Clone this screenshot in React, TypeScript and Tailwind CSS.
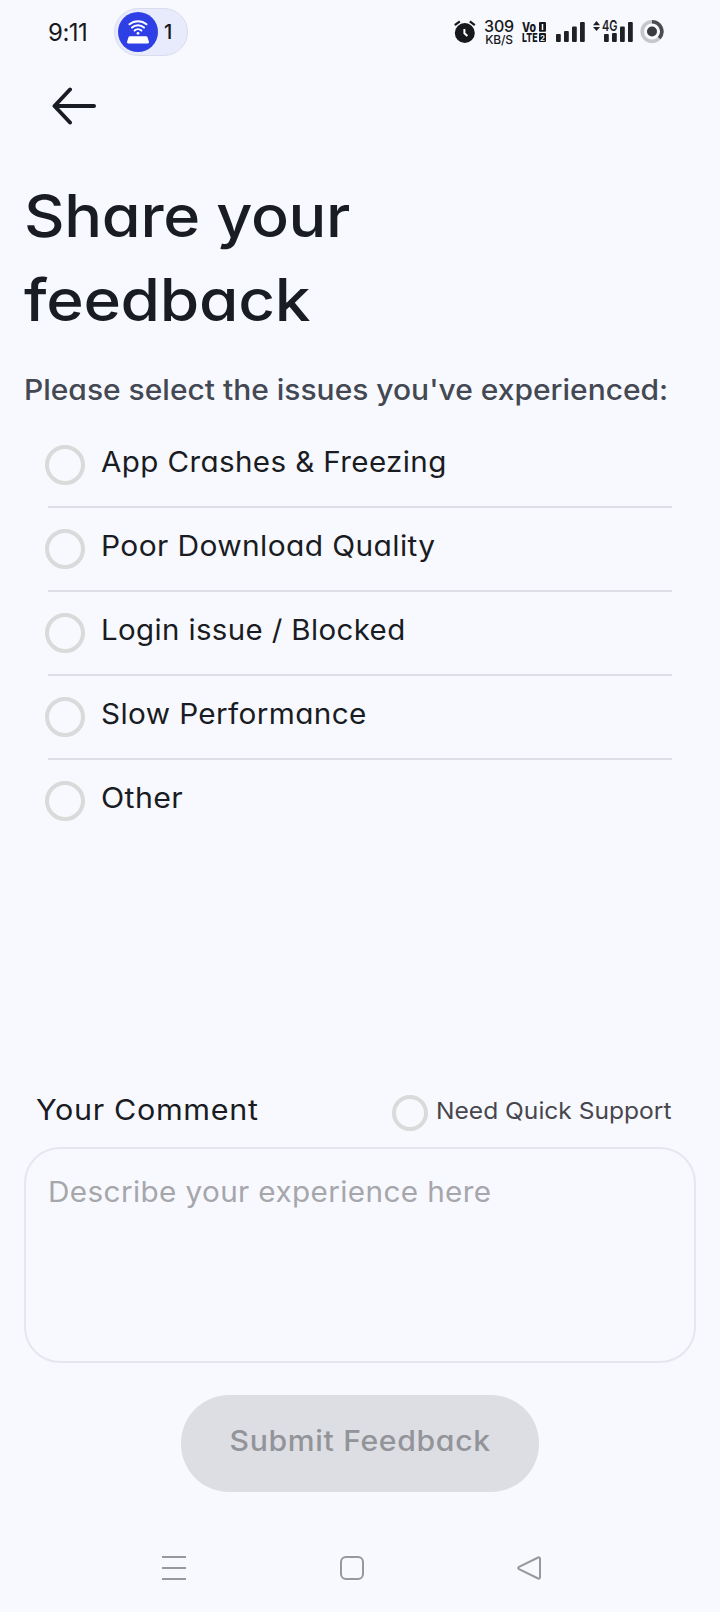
import React from "react";

const options = [
  { label: "App Crashes & Freezing", stretch: "scale-x-[1.057]" },
  { label: "Poor Download Quality", stretch: "scale-x-[1.069]" },
  { label: "Login issue / Blocked", stretch: "scale-x-[1.052]" },
  { label: "Slow Performance", stretch: "scale-x-[1.062]" },
  { label: "Other", stretch: "scale-x-[1.085]" },
];

function StatusBar() {
  return (
    <div className="flex h-16 items-start pl-[48px] text-[#17181c]">
      <span className="mt-[19px] w-[66px] whitespace-nowrap text-[24px] leading-[28px] tracking-[-0.5px]">9:11</span>
      <div className="mt-2 flex h-12 w-[74px] items-center rounded-full border border-[#d9dcee] bg-[#e8ebfb] pl-[3px]">
        <svg width="40" height="40" viewBox="0 0 40 40" className="shrink-0">
          <circle cx="20" cy="20" r="20" fill="#2e3fe6" />
          <g fill="none" stroke="#fff" strokeWidth="2" strokeLinecap="round">
            <path d="M11.500 12.300a13 13 0 0 1 17 0" />
            <path d="M14 15.600a9 9 0 0 1 12 0" />
            <path d="M16.600 18.600a5 5 0 0 1 6.800 0" />
          </g>
          <circle cx="20" cy="21.300" r="1.400" fill="#fff" />
          <path d="M12.200 24.300h15.600c1 0 1.500.4 1.800 1.300l1.300 4.200c.3 1-.2 1.600-1.200 1.600H10.300c-1 0-1.500-.6-1.200-1.600l1.300-4.200c.3-.9.8-1.300 1.800-1.300z" fill="#fff" />
        </svg>
        <span className="ml-[6px] text-[20px] font-medium leading-none">1</span>
      </div>
      <div className="ml-[266px] mt-[18px] flex h-7 items-start">
        <svg width="22" height="28" viewBox="0 0 22 28">
          <circle cx="10.800" cy="15" r="10" fill="#17181c" />
          <path d="M.8 7.200 5.800 3.400M20.800 7.200 15.800 3.400" stroke="#17181c" strokeWidth="2.200" fill="none" />
          <path d="M10.400 11v4.200l3 2.700" stroke="#fff" strokeWidth="2" fill="none" />
        </svg>
        <div className="ml-[8px] mt-[2px] flex w-[30px] flex-col items-center">
          <span className="text-[16px] font-medium leading-[13px] tracking-[-0.2px]">309</span>
          <span className="whitespace-nowrap text-[12px] font-medium leading-[13px] tracking-[-0.2px]">KB/S</span>
        </div>
        <svg width="26" height="28" viewBox="0 0 26 28" className="ml-[8px]" fill="#17181c">
          <text x="0" y="13.600" fontSize="13" fontWeight="800" textLength="14" lengthAdjust="spacingAndGlyphs">Vo</text>
          <text x="0" y="24" fontSize="12" fontWeight="800" textLength="15.500" lengthAdjust="spacingAndGlyphs">LTE</text>
          <rect x="17" y="4" width="7" height="9.800" rx="1" />
          <rect x="17" y="15" width="7" height="9" rx="1" />
          <path d="M20.500 6v6" stroke="#fff" strokeWidth="1.500" />
          <text x="18" y="22.500" fontSize="8" fontWeight="600" fill="#fff">2</text>
        </svg>
        <svg width="30" height="28" viewBox="0 0 30 28" className="ml-[8px]" fill="#202125">
          <rect x="0" y="16" width="4.800" height="8" rx="1" />
          <rect x="8" y="13" width="4.800" height="11" rx="1" />
          <rect x="16" y="8.500" width="4.800" height="15.500" rx="1" />
          <rect x="24" y="4" width="4.800" height="20" rx="1" />
        </svg>
        <svg width="42" height="28" viewBox="0 0 42 28" className="ml-[6px]" fill="#202125">
          <path d="M4.500 3 8 7.200H1zM4.500 13 8 8.900H1z" />
          <text x="10" y="13.400" fontSize="14" fontWeight="600" textLength="15.500" lengthAdjust="spacingAndGlyphs">4G</text>
          <rect x="12" y="16" width="4.800" height="8" rx="1" />
          <rect x="20" y="15" width="4.800" height="9" rx="1" />
          <rect x="28" y="8.500" width="4.800" height="15.500" rx="1" />
          <rect x="36" y="4" width="4.800" height="20" rx="1" />
        </svg>
        <svg width="24" height="28" viewBox="0 0 24 28" className="ml-[5.5px]">
          <circle cx="12" cy="13.500" r="9.800" fill="none" stroke="#c6c7cb" strokeWidth="3.600" />
          <path d="M12 3.700a9.800 9.800 0 0 1 7.200 16.400" fill="none" stroke="#4b4c50" strokeWidth="3.600" />
          <circle cx="12" cy="13.500" r="5" fill="#3a3b3f" />
        </svg>
      </div>
    </div>
  );
}

export default function App() {
  return (
    <div className="flex h-[1612px] w-[720px] flex-col overflow-hidden bg-[#f8f9ff] font-['Inter',sans-serif] text-[#191c22] [font-feature-settings:'cv11']">
      <StatusBar />
      <header className="h-[110px] pl-[52px] pt-[23px]">
        <svg width="44" height="38" viewBox="0 0 44 38" fill="none" stroke="#191c22" strokeWidth="4" strokeLinecap="round" strokeLinejoin="round">
          <path d="M42 19H2.500M18 2.500 2.500 19 18 35.500" />
        </svg>
      </header>
      <h1 className="flex flex-col items-start pl-6 text-[59px] font-medium leading-[84px] tracking-[-0.3px]">
        <span className="origin-left scale-x-[1.066]">Share your</span>
        <span className="origin-left scale-x-[1.083]">feedback</span>
      </h1>
      <p className="mt-[27px] flex pl-6 text-[28px] font-medium leading-[42px] text-[#434852]">
        <span className="origin-left scale-x-[1.07] whitespace-nowrap">Please select the issues you've experienced:</span>
      </p>
      <ul className="ml-12 mr-12 mt-[13px]">
        {options.map((o) => (
          <li key={o.label} className="flex h-[84px] items-start border-b-2 border-[#dddfe6] last:border-transparent">
            <span className="-ml-[3px] mt-[21px] size-10 shrink-0 rounded-full border-4 border-[#dadada]" />
            <span className={"ml-4 mt-[17px] origin-left whitespace-nowrap text-[28px] leading-[42px] tracking-[0.35px] " + o.stretch}>{o.label}</span>
          </li>
        ))}
      </ul>
      <div className="mt-[245px] flex h-[42px] items-start pl-9">
        <div className="flex w-[355.5px] text-[28px] leading-[42px]">
          <span className="origin-left scale-x-[1.09] whitespace-nowrap tracking-[0.6px]">Your Comment</span>
        </div>
        <span className="mt-[5.5px] size-9 shrink-0 rounded-full border-4 border-[#dadada]" />
        <span className="ml-2 mt-px origin-left scale-x-[1.045] whitespace-nowrap text-[23.5px] leading-[42px] text-[#47464c]">Need Quick Support</span>
      </div>
      <div className="mx-6 mt-4 flex h-[216px] items-start rounded-[36px] border-2 border-[#e6e7ee] pl-[22px] pt-[22px] text-[28px] leading-[42px] text-[#a6a6ab]">
        <span className="origin-left scale-x-[1.061] tracking-[0.35px]">Describe your experience here</span>
      </div>
      <button className="ml-[181px] mt-8 flex h-[97px] w-[358px] items-start justify-center rounded-[48px] bg-[#dddee3] pt-[25px] text-[28px] font-medium leading-[42px] text-[#929499]">
        <span className="scale-x-[1.078] tracking-[0.6px]">Submit Feedback</span>
      </button>
      <nav className="mt-[62px] flex pl-[161px]">
        <svg width="26" height="28" viewBox="0 0 26 28" stroke="#97989d" strokeWidth="2" fill="none">
          <path d="M1 3h24M1 14h24M1 25h24" />
        </svg>
        <svg width="26" height="28" viewBox="0 0 26 28" stroke="#97989d" strokeWidth="2" fill="none" className="ml-[152px]">
          <rect x="2" y="3" width="22" height="22" rx="5" />
        </svg>
        <svg width="26" height="28" viewBox="0 0 26 28" stroke="#97989d" strokeWidth="2" fill="none" strokeLinejoin="round" className="ml-[151px]">
          <path d="M22.200 3.500 3 12.800c-1 .5-1 1.900 0 2.400l19.200 9.300c.9.400 1.800-.2 1.800-1.200V4.700c0-1-.9-1.600-1.800-1.200z" />
        </svg>
      </nav>
    </div>
  );
}
